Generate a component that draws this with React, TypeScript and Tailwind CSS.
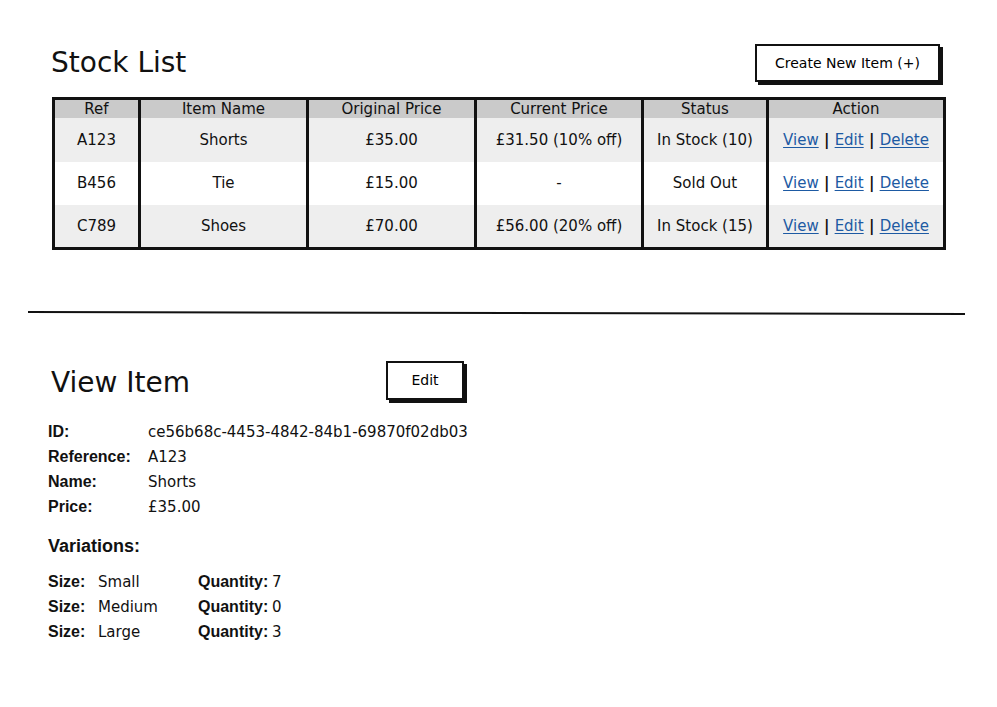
const items = [
  { ref: "A123", name: "Shorts", price: "£35.00", current: "£31.50 (10% off)", status: "In Stock (10)" },
  { ref: "B456", name: "Tie", price: "£15.00", current: "-", status: "Sold Out" },
  { ref: "C789", name: "Shoes", price: "£70.00", current: "£56.00 (20% off)", status: "In Stock (15)" },
];

const details = [
  { label: "ID:", value: "ce56b68c-4453-4842-84b1-69870f02db03" },
  { label: "Reference:", value: "A123" },
  { label: "Name:", value: "Shorts" },
  { label: "Price:", value: "£35.00" },
];

const variations = [
  { size: "Small", qty: 7 },
  { size: "Medium", qty: 0 },
  { size: "Large", qty: 3 },
];

const bold = "font-bold font-['Liberation_Sans',Arial,sans-serif]";

function SketchButton({ children, className }: { children: React.ReactNode; className?: string }) {
  return (
    <button
      className={`border-2 border-[#111] bg-white text-[14px] text-black shadow-[3px_3px_0_#111] ${className ?? ""}`}
    >
      {children}
    </button>
  );
}

function Cell({ children, last }: { children: React.ReactNode; last?: boolean }) {
  return (
    <td className={`text-center align-middle ${last ? "" : "border-r-[3px] border-[#111]"}`}>
      {children}
    </td>
  );
}

export default function App() {
  return (
    <div className="w-[997px] h-[707px] bg-white text-[#111] font-['DejaVu_Sans',sans-serif] text-[15px]">
      {/* Stock list */}
      <div className="px-[52px] pt-[44px]">
        <div className="flex items-center justify-between">
          <h1 className="text-[28px] leading-none -ml-[1px]">Stock List</h1>
          <SketchButton className="h-[38px] w-[185px] mr-[5px]">Create New Item (+)</SketchButton>
        </div>

        <table className="mt-[15px] w-[891px] border-collapse border-[3px] border-[#111] table-fixed">
          <colgroup>
            <col className="w-[86px]" />
            <col className="w-[168px]" />
            <col className="w-[168px]" />
            <col className="w-[167px]" />
            <col className="w-[125px]" />
            <col className="w-[177px]" />
          </colgroup>
          <thead>
            <tr className="h-[18px] bg-[#cacaca] leading-[18px]">
              {["Ref", "Item Name", "Original Price", "Current Price", "Status", "Action"].map((h, i) => (
                <th key={h} className={`font-normal text-center ${i < 5 ? "border-r-[3px] border-[#111]" : ""}`}>
                  {h}
                </th>
              ))}
            </tr>
          </thead>
          <tbody>
            {items.map((it, i) => (
              <tr key={it.ref} className={`${i === 0 ? "h-[44px]" : "h-[43px]"} ${i % 2 === 0 ? "bg-[#eeeeee]" : "bg-white"}`}>
                <Cell>{it.ref}</Cell>
                <Cell>{it.name}</Cell>
                <Cell>{it.price}</Cell>
                <Cell>{it.current}</Cell>
                <Cell>{it.status}</Cell>
                <Cell last>
                  <a className="text-[#1d5aa3] underline underline-offset-2">View</a>
                  <span className="font-bold"> | </span>
                  <a className="text-[#1d5aa3] underline underline-offset-2">Edit</a>
                  <span className="font-bold"> | </span>
                  <a className="text-[#1d5aa3] underline underline-offset-2">Delete</a>
                </Cell>
              </tr>
            ))}
          </tbody>
        </table>
      </div>

      {/* divider */}
      <div className="mt-[62px] ml-[28px] w-[937px] h-[2px] bg-[#111] rotate-[0.12deg]" />

      {/* View item */}
      <div className="pl-[48px] mt-[47px]">
        <div className="flex items-center">
          <h2 className="w-[338px] pl-[3px] pt-[6px] text-[28px] leading-none">View Item</h2>
          <SketchButton className="h-[39px] w-[78px]">Edit</SketchButton>
        </div>

        <div className="mt-[19px] grid grid-cols-[100px_auto] auto-rows-[25px] items-baseline leading-[25px]">
          {details.map((d) => (
            <div key={d.label} className="contents">
              <span className={`text-[16px] ${bold}`}>{d.label}</span>
              <span>{d.value}</span>
            </div>
          ))}
        </div>

        <h3 className={`mt-[15px] text-[18px] leading-[25px] ${bold}`}>Variations:</h3>

        <div className="mt-[10px] grid grid-cols-[50px_100px_74px_auto] auto-rows-[25px] items-baseline leading-[25px] w-[300px]">
          {variations.map((v) => (
            <div key={v.size} className="contents">
              <span className={`text-[16px] ${bold}`}>Size:</span>
              <span>{v.size}</span>
              <span className={`text-[16px] ${bold}`}>Quantity:</span>
              <span>{v.qty}</span>
            </div>
          ))}
        </div>
      </div>
    </div>
  );
}
